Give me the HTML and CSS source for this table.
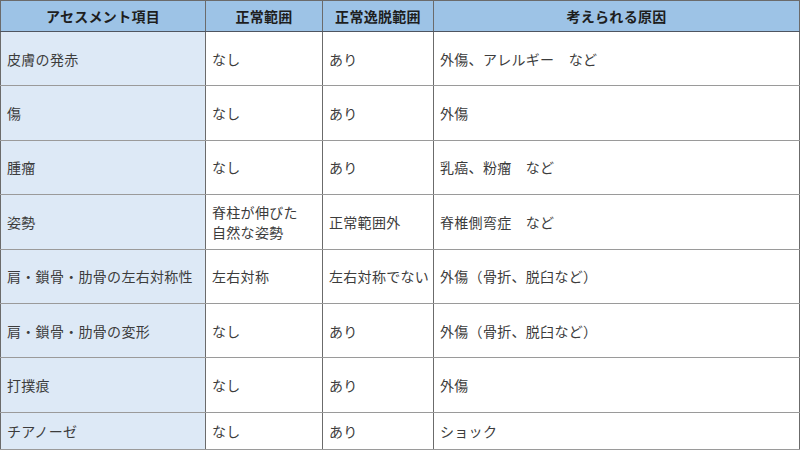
FILE: index.html
```html
<!DOCTYPE html>
<html lang="ja">
<head>
<meta charset="utf-8">
<link rel="stylesheet" href="styles.css">
</head>
<body>
<table class="tbl">
  <colgroup>
    <col class="c1"><col class="c2"><col class="c3"><col class="c4">
  </colgroup>
  <thead>
    <tr class="head">
      <th>アセスメント項目</th>
      <th>正常範囲</th>
      <th>正常逸脱範囲</th>
      <th>考えられる原因</th>
    </tr>
  </thead>
  <tbody>
    <tr class="row"><td class="item">皮膚の発赤</td><td>なし</td><td>あり</td><td>外傷、アレルギー　など</td></tr>
    <tr class="row"><td class="item">傷</td><td>なし</td><td>あり</td><td>外傷</td></tr>
    <tr class="row"><td class="item">腫瘤</td><td>なし</td><td>あり</td><td>乳癌、粉瘤　など</td></tr>
    <tr class="row"><td class="item">姿勢</td><td class="two">脊柱が伸びた<br>自然な姿勢</td><td>正常範囲外</td><td>脊椎側弯症　など</td></tr>
    <tr class="row"><td class="item">肩・鎖骨・肋骨の左右対称性</td><td>左右対称</td><td>左右対称でない</td><td>外傷（骨折、脱臼など）</td></tr>
    <tr class="row"><td class="item">肩・鎖骨・肋骨の変形</td><td>なし</td><td>あり</td><td>外傷（骨折、脱臼など）</td></tr>
    <tr class="row"><td class="item">打撲痕</td><td>なし</td><td>あり</td><td>外傷</td></tr>
    <tr class="row last"><td class="item">チアノーゼ</td><td>なし</td><td>あり</td><td>ショック</td></tr>
  </tbody>
</table>
</body>
</html>
```
FILE: styles.css
```css
html, body {
  margin: 0;
  padding: 0;
  background: #ffffff;
}
body {
  font-family: "Noto Sans CJK JP", "Noto Sans", sans-serif;
  color: #3c3c3c;
  overflow: hidden;
}
.tbl {
  border-collapse: collapse;
  table-layout: fixed;
  width: 799px;
  border: 1px solid #6b6b6b;
}
.c1 { width: 205px; }
.c2 { width: 117px; }
.c3 { width: 111px; }
.c4 { width: 366px; }
.tbl th, .tbl td {
  border-left: 1px solid #6b6b6b;
  border-right: 1px solid #6b6b6b;
  padding: 0 6px;
  font-size: 14px;
  letter-spacing: 0.3px;
  vertical-align: middle;
  white-space: nowrap;
  overflow: hidden;
}
.tbl td {
  border-top: 1px solid #9a9a9a;
  border-bottom: 1px solid #9a9a9a;
  text-align: left;
  font-weight: 400;
}
.head th {
  height: 30px;
  background: #9dc3e6;
  color: #1e1e1e;
  font-weight: 700;
  text-align: center;
  border-bottom: 1px solid #4f5560;
}
.row td {
  height: 53.4px;
}
.row.last td {
  height: 36px;
}
.item {
  background: #dde9f6;
}
.two {
  line-height: 20px;
}
```
